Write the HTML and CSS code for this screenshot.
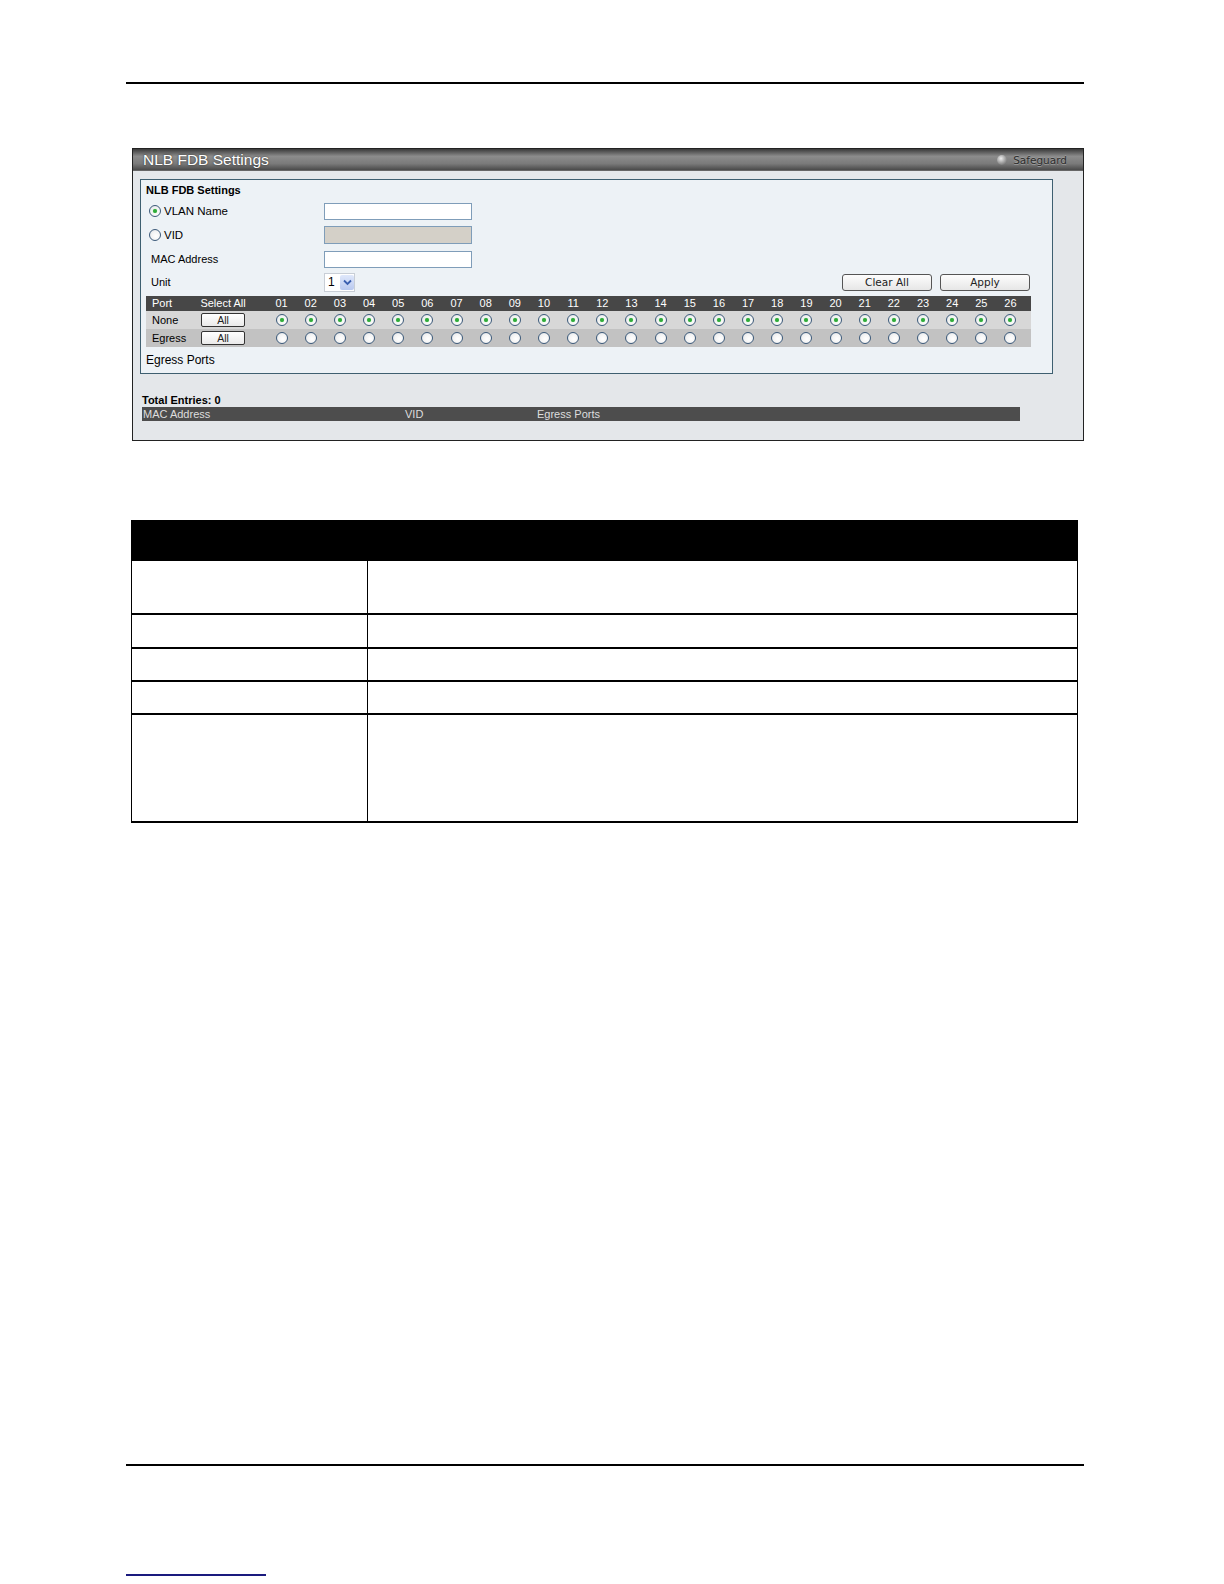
FILE: index.html
```html
<!DOCTYPE html>
<html>
<head>
<meta charset="utf-8">
<link rel="stylesheet" href="styles.css">
</head>
<body>
<div class="page">
  <div class="rule rule-top"></div>

  <div class="panel">
    <div class="titlebar">
      <span class="title">NLB FDB Settings</span>
      <span class="safeguard"><span class="sg-dot"></span>Safeguard</span>
    </div>
    <div class="panel-body">
      <div class="fieldset">
        <div class="legend">NLB FDB Settings</div>
        <div class="form-row r1">
          <label class="lbl"><span class="radio checked"></span>VLAN Name</label>
          <span class="input"></span>
        </div>
        <div class="form-row r2">
          <label class="lbl"><span class="radio"></span>VID</label>
          <span class="input disabled"></span>
        </div>
        <div class="form-row r3">
          <label class="lbl plain">MAC Address</label>
          <span class="input"></span>
        </div>
        <div class="form-row r4">
          <label class="lbl plain">Unit</label>
          <span class="select"><span class="sel-val">1</span><span class="sel-btn"><svg width="9" height="7" viewBox="0 0 9 7"><path d="M1 1.5 L4.5 5 L8 1.5" fill="none" stroke="#3a5fb0" stroke-width="1.8"/></svg></span></span>
          <span class="spacer"></span>
          <span class="btn btn-clear">Clear All</span>
          <span class="btn btn-apply">Apply</span>
        </div>
        <div class="ports" id="ports">
          <div class="ph c1">Port</div><div class="ph c2">Select All</div><div class="ph gapc"></div>
        </div>
        <div class="egress-label">Egress Ports</div>
      </div>
      <div class="total">Total Entries: 0</div>
      <div class="result-head">
        <span class="rh-mac">MAC Address</span>
        <span class="rh-vid">VID</span>
        <span class="rh-eg">Egress Ports</span>
      </div>
    </div>
  </div>

  <table class="desc">
    <tr class="dh"><th class="dc1"></th><th></th></tr>
    <tr class="d1"><td class="dc1"></td><td></td></tr>
    <tr class="d2"><td class="dc1"></td><td></td></tr>
    <tr class="d3"><td class="dc1"></td><td></td></tr>
    <tr class="d4"><td class="dc1"></td><td></td></tr>
    <tr class="d5"><td class="dc1"></td><td></td></tr>
  </table>

  <div class="rule rule-bottom"></div>
  <div class="link-line"></div>
</div>
<script src="script.js"></script>
</body>
</html>
```

FILE: script.js
```js
(function () {
  var g = document.getElementById('ports');
  var html = '';
  var i;
  for (i = 1; i <= 26; i++) {
    html += '<div class="ph pn">' + (i < 10 ? '0' + i : i) + '</div>';
  }
  html += '<div class="ph"></div>';
  html += '<div class="pr1 c1">None</div><div class="pr1 c2"><span class="allbtn">All</span></div><div class="pr1"></div>';
  for (i = 1; i <= 26; i++) html += '<div class="pr1 pc"><span class="radio checked"></span></div>';
  html += '<div class="pr1"></div>';
  html += '<div class="pr2 c1">Egress</div><div class="pr2 c2"><span class="allbtn">All</span></div><div class="pr2"></div>';
  for (i = 1; i <= 26; i++) html += '<div class="pr2 pc"><span class="radio"></span></div>';
  html += '<div class="pr2"></div>';
  g.insertAdjacentHTML('beforeend', html);
})();
```

FILE: styles.css
```css
html { margin: 0; padding: 0; width: 1224px; height: 1584px; overflow: hidden; background: #fff; }
body { margin: 0; padding: 0; width: 1224px; height: 1584px; overflow: hidden; font-family: "Liberation Sans", Arial, sans-serif; color: #000; }
.page { display: flex; flex-direction: column; width: 1224px; height: 1584px; overflow: hidden; }

.rule { height: 2px; background: #000; margin-left: 126px; width: 958px; flex: none; }
.rule-top { margin-top: 82px; }

.panel {
  margin-top: 64px; margin-left: 132px; width: 950px; height: 291px; flex: none;
  border: 1px solid #222; display: flex; flex-direction: column;
  background: #e4e7ea;
}
.titlebar {
  height: 21px; display: flex; align-items: center; justify-content: space-between; flex: none;
  background: linear-gradient(to bottom, #3a3a3a 0%, #8c8c8c 35%, #7a7a7a 70%, #4a4a4a 100%);
  padding: 0 16px 0 10px; border-bottom: 1px solid #666;
}
.title { color: #fff; font-size: 15.5px; text-shadow: 0 0 2px #222; }
.safeguard { display: flex; align-items: center; font-family: "DejaVu Sans", sans-serif; font-size: 10.5px; color: #2e2e2e; text-shadow: 0 1px 0 #9a9a9a, 0 -1px 0 #9a9a9a; }
.sg-dot { width: 10px; height: 10px; border-radius: 50%; background: radial-gradient(circle at 40% 35%, #eee 0%, #999 55%, #555 100%); margin-right: 6px; }

.panel-body { display: flex; flex-direction: column; padding: 8px 0 0 7px; }
.fieldset {
  width: 906px; height: 193px; border: 1px solid #3e5f70; background: #edf2f6; flex: none;
  padding: 0 0 0 5px; display: flex; flex-direction: column;
}
.legend { font-size: 11px; font-weight: bold; margin-top: 4px; height: 13px; line-height: 13px; }
.form-row { display: flex; align-items: center; flex: none; }
.r1 { margin-top: 6px; height: 16px; }
.r2 { margin-top: 7px; height: 17px; }
.r3 { margin-top: 8px; height: 16px; }
.r4 { margin-top: 6px; height: 18px; }
.lbl { width: 175px; display: flex; align-items: center; font-size: 11.5px; padding-left: 3px; }
.lbl.plain { padding-left: 5px; width: 173px; font-size: 11px; }
.lbl .radio { margin-right: 3px; }
.input { width: 146px; height: 15px; border: 1px solid #7f9db9; background: #fff; }
.input.disabled { background: #d4d0c8; height: 16px; }
.select { display: flex; width: 29px; height: 17px; border: 1px solid #c8ced6; background: #fff; }
.sel-val { width: 15px; font-size: 12px; line-height: 17px; padding-left: 3px; box-sizing: border-box; }
.sel-btn { width: 14px; height: 15px; margin: 1px 0; background: linear-gradient(#dfe8fb, #b9c9ef); border-radius: 2px; display: flex; align-items: center; justify-content: center; }
.spacer { flex: 1; }
.btn {
  width: 88px; height: 15px; border: 1px solid #555; border-radius: 3px;
  background: linear-gradient(#fdfdfd, #e6e6e6); text-align: center; line-height: 15px;
  font-family: "DejaVu Sans", sans-serif; font-size: 10.5px; color: #222;
}
.btn-clear { margin-right: 8px; }
.btn-apply { margin-right: 22px; }

.ports {
  margin-top: 5px; width: 885px; flex: none;
  display: grid; grid-template-columns: 50px 54px 17px repeat(26, 29.16px) 1fr;
  grid-template-rows: 15px 18px 18px;
  font-size: 11px;
}
.ph { background: #474747; color: #fff; line-height: 15px; }
.c1 { padding-left: 6px; }
.c2 { text-align: center; }
.pn { text-align: center; }
.pr1 { background: #d7d7d7; display: flex; align-items: center; }
.pr2 { background: #c2c2c2; display: flex; align-items: center; }
.pr1.c2, .pr2.c2, .pc { justify-content: center; }
.allbtn {
  width: 42px; height: 12px; border: 1px solid #333; border-radius: 2px; background: linear-gradient(#fff, #eaeaea);
  font-size: 10.5px; line-height: 12px; text-align: center; color: #222;
}

.radio {
  display: inline-block; width: 10px; height: 10px; border-radius: 50%;
  border: 1px solid #3c5a7a; background: radial-gradient(circle at 60% 60%, #fff 0%, #f4f4f4 50%, #d8dde2 100%);
  position: relative; box-sizing: content-box;
}
.radio.checked::after {
  content: ""; position: absolute; left: 3px; top: 3px; width: 4px; height: 4px; border-radius: 50%;
  background: #2faa3a; box-shadow: 0 0 1px #6bd46f;
}

.egress-label { font-size: 12px; margin-top: 6px; }
.total { font-size: 11px; font-weight: bold; margin-top: 19px; margin-left: 2px; height: 14px; line-height: 14px; }
.result-head {
  margin-left: 2px; width: 878px; height: 14px; background: #4d4d4d; color: #ddd; font-size: 11px; line-height: 14px;
  display: flex;
}
.rh-mac { width: 262px; padding-left: 1px; }
.rh-vid { width: 132px; }

.desc {
  margin-top: 79px; margin-left: 131px; width: 947px; border-collapse: collapse; flex: none;
}
.desc th, .desc td { border: 1px solid #000; padding: 0; }
.desc tr { border-bottom: 2px solid #000; }
.desc th { background: #000; }
.dc1 { width: 235px; }
.dh { height: 39px; }
.d1 { height: 54px; }
.d2 { height: 34px; }
.d3 { height: 33px; }
.d4 { height: 33px; }
.d5 { height: 108px; }

.rule-bottom { margin-top: 641px; }
.link-line { margin-top: 108px; margin-left: 126px; width: 140px; height: 2px; background: #1a1a7e; flex: none; }
```
